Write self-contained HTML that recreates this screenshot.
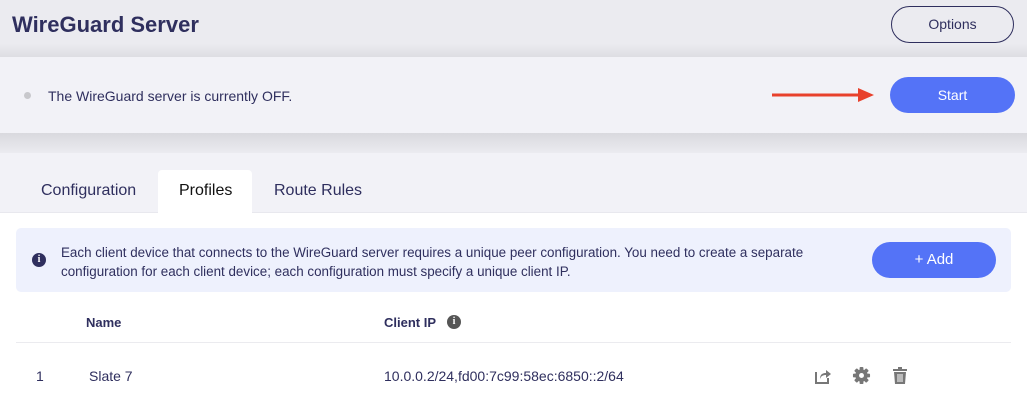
<!DOCTYPE html>
<html><head><style>
*{box-sizing:border-box;margin:0;padding:0}
body{width:1027px;height:404px;overflow:hidden;font-family:"Liberation Sans",sans-serif;background:#fff;position:relative}
.top{position:absolute;left:0;top:0;width:1027px;height:57px;background:linear-gradient(#ebebf0 0,#ebebf0 44px,#dedee3 57px)}
h1{position:absolute;left:12px;top:12px;font-size:22px;color:#2f2f5e;font-weight:bold}
.opt{position:absolute;left:891px;top:6px;width:123px;height:37px;border:1px solid #2f2f5e;border-radius:19px;text-align:center;line-height:35px;font-size:14px;color:#2f2f5e}
.card{position:absolute;left:0;top:57px;width:1027px;height:76px;background:#f2f2f7}
.band{position:absolute;left:0;top:133px;width:1027px;height:20px;background:linear-gradient(#d9d9de,#ebebf0)}
.dot{position:absolute;left:24px;top:92px;width:7px;height:7px;border-radius:50%;background:#c8c8cc}
.st{position:absolute;left:48px;top:88px;font-size:14px;color:#2f2f5e}
.start{position:absolute;left:890px;top:77px;width:125px;height:36px;background:#5473f7;border-radius:18px;color:#fff;text-align:center;line-height:36px;font-size:14px}
.tabs{position:absolute;left:0;top:153px;width:1027px;height:60px;background:#f2f2f7;border-bottom:1px solid #e8e8ee}
.tab{position:absolute;top:182px;font-size:16px;color:#2f2f5e}
.act{position:absolute;left:158px;top:170px;width:94px;height:44px;background:#fff;border-radius:4px 4px 0 0}
.info{position:absolute;left:16px;top:228px;width:995px;height:64px;background:#eef1fd;border-radius:5px}
.info p{position:absolute;left:45px;top:15px;width:800px;font-size:13.4px;line-height:19px;color:#2f2f5e}
.ii{position:absolute;left:16px;top:25px;width:14px;height:14px;border-radius:50%;background:#2f2f5e;color:#fff;font-size:10px;font-weight:bold;text-align:center;line-height:14px;font-family:"Liberation Serif",serif}
.add{position:absolute;left:872px;top:242px;width:124px;height:36px;background:#5473f7;border-radius:18px;color:#fff;text-align:center;line-height:36px;font-size:15px}
.th{position:absolute;top:315px;font-size:13px;font-weight:bold;color:#2f2f5e}
.line{position:absolute;left:16px;top:342px;width:995px;height:1px;background:#ebebef}
.td{position:absolute;top:368px;font-size:14px;color:#2f2f5e}
</style></head><body>
<div class="top"></div>
<h1>WireGuard Server</h1>
<div class="opt">Options</div>
<div class="card"></div><div class="band"></div>
<div class="dot"></div>
<div class="st">The WireGuard server is currently OFF.</div>
<svg style="position:absolute;left:770px;top:85px" width="110" height="20"><line x1="2" y1="10" x2="95" y2="10" stroke="#e8412c" stroke-width="3"/><path d="M88 3 L104 10 L88 17 Z" fill="#e8412c"/></svg>
<div class="start">Start</div>
<div class="tabs"></div>
<div class="act"></div>
<div class="tab" style="left:41px">Configuration</div>
<div class="tab" style="left:179px;color:#111">Profiles</div>
<div class="tab" style="left:274px">Route Rules</div>
<div class="info"><div class="ii">i</div><p>Each client device that connects to the WireGuard server requires a unique peer configuration. You need to create a separate configuration for each client device; each configuration must specify a unique client IP.</p></div>
<div class="add">+ Add</div>
<div class="th" style="left:86px">Name</div>
<div class="th" style="left:384px">Client IP</div>
<div style="position:absolute;left:447px;top:315px;width:14px;height:14px;border-radius:50%;background:#555;color:#fff;font-size:10px;font-weight:bold;text-align:center;line-height:14px;font-family:'Liberation Serif',serif">i</div>
<div class="line"></div>
<div class="td" style="left:36px">1</div>
<div class="td" style="left:89px">Slate 7</div>
<div class="td" style="left:384px">10.0.0.2/24,fd00:7c99:58ec:6850::2/64</div>
<svg style="position:absolute;left:814px;top:367px" width="18" height="18" viewBox="0 0 18 18"><path d="M2 5 V16 H14 V11" fill="none" stroke="#777" stroke-width="2"/><path d="M6 12 C6 7 9 6 12 6 V3 L17 7 L12 11 V8 C9 8 7 9 6 12Z" fill="#777"/></svg>
<svg style="position:absolute;left:852px;top:366px" width="19" height="19" viewBox="0 0 20 20"><g fill="#777"><circle cx="10" cy="10" r="6.5"/><rect x="8" y="1" width="4" height="18" rx="1"/><rect x="1" y="8" width="18" height="4" rx="1"/><rect x="8" y="1" width="4" height="18" rx="1" transform="rotate(45 10 10)"/><rect x="8" y="1" width="4" height="18" rx="1" transform="rotate(-45 10 10)"/></g><circle cx="10" cy="10" r="2.6" fill="#fff"/></svg>
<svg style="position:absolute;left:892px;top:367px" width="16" height="18" viewBox="0 0 16 18"><rect x="1" y="2" width="14" height="2" fill="#777"/><rect x="6" y="0" width="4" height="2" fill="#777"/><path d="M2 5 H14 L13 17 H3 Z" fill="#777"/><g stroke="#fff" stroke-width="1"><line x1="6" y1="7" x2="6" y2="15"/><line x1="8" y1="7" x2="8" y2="15"/><line x1="10" y1="7" x2="10" y2="15"/></g></svg>
</body></html>
